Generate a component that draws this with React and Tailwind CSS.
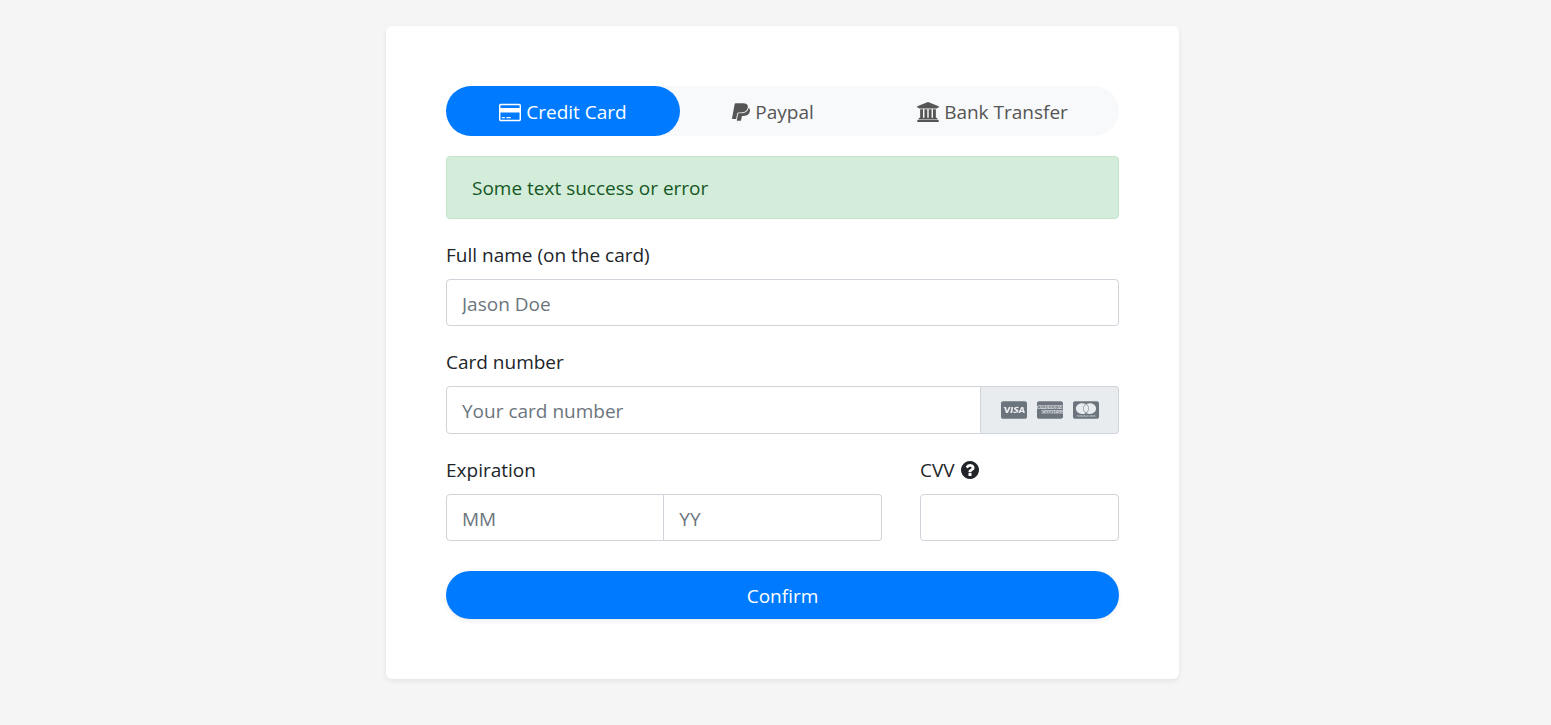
import React, { useState } from 'react';
import { FaPaypal, FaCcVisa, FaCcAmex, FaCcMastercard } from 'react-icons/fa';

const CreditCardIcon = () => (
  <svg viewBox="0 0 1920 1792" className="h-[21px] w-[22px] shrink-0" fill="currentColor" aria-hidden="true">
    <path d="M1760 128q66 0 113 47t47 113v1216q0 66-47 113t-113 47h-1600q-66 0-113-47t-47-113v-1216q0-66 47-113t113-47h1600zm-1600 128q-13 0-22.5 9.5t-9.5 22.5v224h1664v-224q0-13-9.5-22.5t-22.5-9.5h-1600zm1600 1280q13 0 22.5-9.5t9.5-22.5v-608h-1664v608q0 13 9.5 22.5t22.5 9.5h1600zm-1504-128v-128h256v128h-256zm384 0v-128h384v128h-384z" />
  </svg>
);

const PaypalIcon = () => (
  <FaPaypal className="h-5 w-[18px] shrink-0" preserveAspectRatio="none" aria-hidden="true" />
);

const BankIcon = () => (
  <svg viewBox="0 0 1920 1792" className="h-5 w-[22px] shrink-0" fill="currentColor" aria-hidden="true">
    <path d="M960 0l960 384v128h-128q0 26-20.5 45t-48.5 19h-1526q-28 0-48.5-19t-20.5-45h-128v-128zm-704 640h256v768h128v-768h256v768h128v-768h256v768h128v-768h256v768h59q28 0 48.5 19t20.5 45v64h-1664v-64q0-26 20.5-45t48.5-19h59v-768zm1595 960q28 0 48.5 19t20.5 45v128h-1920v-128q0-26 20.5-45t48.5-19h1782z" />
  </svg>
);

const QuestionIcon = () => (
  <svg viewBox="128 128 1536 1536" className="h-[18px] w-[18px] shrink-0" fill="currentColor" aria-hidden="true">
    <path d="M1024 1376v-192q0-14-9-23t-23-9h-192q-14 0-23 9t-9 23v192q0 14 9 23t23 9h192q14 0 23-9t9-23zm256-672q0-88-55.5-163t-138.5-116-170-41q-243 0-371 213-15 24 8 42l132 100q7 6 19 6 16 0 25-12 53-68 86-92 34-24 86-24 48 0 85.5 26t37.5 59q0 38-20 61t-68 45q-63 28-115.5 86.5t-52.5 125.5v36q0 14 9 23t23 9h192q14 0 23-9t9-23q0-19 21.5-49.5t54.5-49.5q32-18 49-28.5t46-35 44.5-48 28-60.5 12.5-81zm384 192q0 209-103 385.5t-279.5 279.5-385.5 103-385.5-103-279.5-279.5-103-385.5 103-385.5 279.5-279.5 385.5-103 385.5 103 279.5 279.5 103 385.5z" />
  </svg>
);

const tabs = [
  { id: 'card', label: 'Credit Card', icon: CreditCardIcon },
  { id: 'paypal', label: 'Paypal', icon: PaypalIcon },
  { id: 'bank', label: 'Bank Transfer', icon: BankIcon },
];

const cardBrands = [FaCcVisa, FaCcAmex, FaCcMastercard];

const labelClass = 'mb-[9px] flex items-center gap-1.5 pt-px leading-[30px]';
const inputClass =
  'block h-[47px] w-full min-w-0 border border-[#ced4da] bg-white px-[15px] pt-0.5 placeholder:text-[#6c757d] focus:border-[#80bdff] focus:outline-none';

const App = () => {
  const [activeTab, setActiveTab] = useState('card');

  return (
    <div className="min-h-screen bg-[#f5f5f5] pt-[26px] pb-[46px] pl-3.5 font-['Open_Sans',sans-serif] text-[19px] text-[#212529]">
      <main className="mx-auto max-w-[793px] rounded-md bg-white p-[60px] shadow-[0_2px_5px_rgba(0,0,0,0.075)]">
        {/* Payment methods */}
        <div role="tablist" className="mb-5 grid grid-cols-[234fr_186fr_253fr] rounded-full bg-[#f8f9fa]">
          {tabs.map((tab) => (
            <button
              key={tab.id}
              type="button"
              role="tab"
              aria-selected={activeTab === tab.id}
              onClick={() => setActiveTab(tab.id)}
              className={`flex h-[50px] cursor-pointer items-center justify-center gap-[5px] rounded-full pt-0.5 ${
                activeTab === tab.id ? 'bg-[#007bff] text-white' : 'text-[#555555]'
              }`}
            >
              <tab.icon />
              {tab.label}
            </button>
          ))}
        </div>

        <p role="alert" className="mb-5 rounded border border-[#c3e6cb] bg-[#d4edda] px-[25px] pt-[17px] pb-[15px] leading-[29px] text-[#155724]">
          Some text success or error
        </p>

        <form onSubmit={(e) => e.preventDefault()}>
          <div className="mb-5">
            <label htmlFor="username" className={labelClass}>Full name (on the card)</label>
            <input id="username" type="text" placeholder="Jason Doe" className={`${inputClass} rounded`} />
          </div>

          <div className="mb-5">
            <label htmlFor="cardNumber" className={labelClass}>Card number</label>
            <div className="flex h-12">
              <input id="cardNumber" type="text" placeholder="Your card number" className={`${inputClass} h-full rounded-l`} />
              <span className="flex shrink-0 items-center gap-2.5 rounded-r border border-l-0 border-[#ced4da] bg-[#e9ecef] pr-[19px] pl-5 text-[#6c757d]">
                {cardBrands.map((Brand, idx) => (
                  <Brand key={idx} className="h-5 w-[26px]" preserveAspectRatio="none" aria-hidden="true" />
                ))}
              </span>
            </div>
          </div>

          <div className="mb-[30px] grid grid-cols-3 gap-[38px]">
            <div className="col-span-2">
              <label htmlFor="month" className={labelClass}>Expiration</label>
              <div className="flex">
                <input id="month" type="text" placeholder="MM" className={`${inputClass} rounded-l`} />
                <input type="text" placeholder="YY" aria-label="Expiration year" className={`${inputClass} rounded-r border-l-0`} />
              </div>
            </div>
            <div>
              <label htmlFor="cvv" title="Three-digit code on the back of your card" className={labelClass}>
                CVV <QuestionIcon />
              </label>
              <input id="cvv" type="text" className={`${inputClass} rounded`} />
            </div>
          </div>

          <button type="submit" className="h-12 w-full cursor-pointer rounded-full bg-[#007bff] pt-0.5 text-white shadow-[0_2px_5px_rgba(0,0,0,0.075)]">
            Confirm
          </button>
        </form>
      </main>
    </div>
  );
};

export default App;
